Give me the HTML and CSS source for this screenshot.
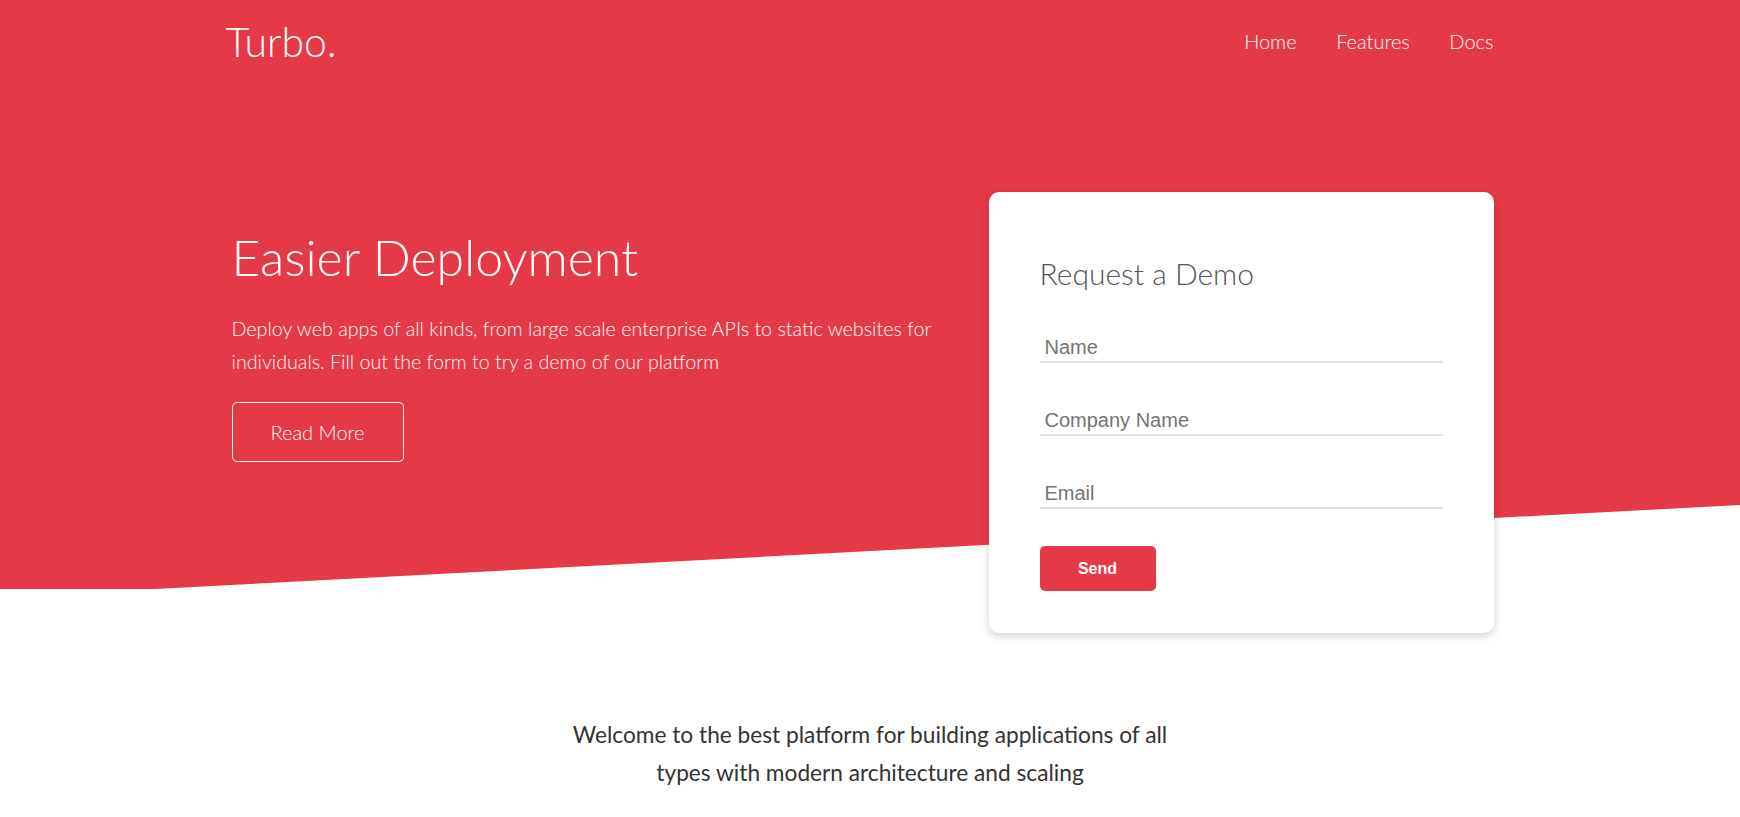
FILE: index.html
```html
<!DOCTYPE html>
<html lang="en">
<head>
<meta charset="utf-8">
<title>Turbo.</title>
<link rel="stylesheet" href="styles.css">
</head>
<body>
<div class="hero">
  <div class="hero-inner">
    <header class="container header">
      <div class="logo">Turbo.</div>
      <nav class="nav">
        <a href="#">Home</a>
        <a href="#">Features</a>
        <a href="#">Docs</a>
      </nav>
    </header>
    <section class="container showcase">
      <div class="showcase-text">
        <h1 class="title">Easier Deployment</h1>
        <p class="lead">Deploy web apps of all kinds, from large scale enterprise APIs to static websites for individuals. Fill out the form to try a demo of our platform</p>
        <a href="#" class="btn-outline">Read More</a>
      </div>
      <div class="card">
        <h2 class="card-title">Request a Demo</h2>
        <form class="form">
          <input class="field" type="text" placeholder="Name">
          <input class="field" type="text" placeholder="Company Name">
          <input class="field" type="email" placeholder="Email">
          <button class="btn-send" type="button">Send</button>
        </form>
      </div>
    </section>
  </div>
</div>
<section class="welcome">
  <p>Welcome to the best platform for building applications of all types with modern architecture and scaling</p>
</section>
</body>
</html>
```
FILE: styles.css
```css
* { box-sizing: border-box; }

body {
  margin: 0;
  font-family: Lato, "Open Sans", sans-serif;
  color: #333;
  background: #fff;
}

.hero {
  position: relative;
  color: #fff;
}

.hero::before {
  content: "";
  position: absolute;
  left: 0;
  top: 0;
  width: 100%;
  height: 589px;
  background: #e63946;
  clip-path: polygon(0 0, 100% 0, 100% 505px, 155px 589px, 0 589px);
}

.hero-inner {
  position: relative;
  padding-right: 21px;
}

.container {
  width: 1268px;
  margin: 0 auto;
}

.header {
  display: flex;
  justify-content: space-between;
  align-items: center;
  padding: 18px 0;
}

.logo {
  font-size: 41px;
  font-weight: 300;
  line-height: 48px;
}

.nav {
  display: flex;
  gap: 39.5px;
  margin-top: -2px;
}

.nav a {
  color: #fff;
  text-decoration: none;
  font-size: 20px;
  font-weight: 300;
}

.showcase {
  display: flex;
  justify-content: space-between;
  align-items: flex-start;
  padding-top: 107px;
}

.showcase-text {
  padding-left: 6px;
  margin-top: 36px;
  max-width: 740px;
}

.title {
  margin: 0;
  font-size: 50px;
  font-weight: 300;
  line-height: 60px;
}

.lead {
  margin: 25px 0 24px;
  font-size: 19.7px;
  font-weight: 300;
  line-height: 33px;
}

.btn-outline {
  display: inline-flex;
  align-items: center;
  justify-content: center;
  width: 172px;
  height: 60px;
  border: 1px solid #fff;
  border-radius: 5px;
  color: #fff;
  text-decoration: none;
  font-size: 20px;
  font-weight: 300;
}

.card {
  width: 505px;
  margin-top: 1px;
  background: #fff;
  border-radius: 10px;
  box-shadow: 0 3px 10px rgba(0, 0, 0, 0.18);
  padding: 50px 51px 42px;
  color: #555;
}

.card-title {
  margin: 14px 0 32px;
  font-size: 30px;
  font-weight: 300;
  line-height: 34px;
  color: #555;
}

.form {
  display: flex;
  flex-direction: column;
  align-items: flex-start;
}

.field {
  width: 100%;
  height: 41px;
  margin: 0 0 32px;
  padding: 14px 4px 2px 5px;
  border: 0;
  border-bottom: 2px solid #e1e2e6;
  font-family: "Liberation Sans", Arial, sans-serif;
  font-size: 20px;
  color: #333;
  outline: none;
  background: transparent;
}

.field::placeholder {
  color: #757575;
}

.btn-send {
  margin-top: 5px;
  width: 116px;
  height: 45px;
  border: 0;
  border-radius: 5px;
  background: #e63946;
  color: #fff;
  font-family: "Liberation Sans", Arial, sans-serif;
  font-size: 16px;
  font-weight: 700;
  cursor: pointer;
}

.welcome {
  display: flex;
  justify-content: center;
  padding-top: 83px;
}

.welcome p {
  margin: 0;
  max-width: 610px;
  text-align: center;
  font-size: 22.7px;
  line-height: 38px;
  color: #333;
}
```
